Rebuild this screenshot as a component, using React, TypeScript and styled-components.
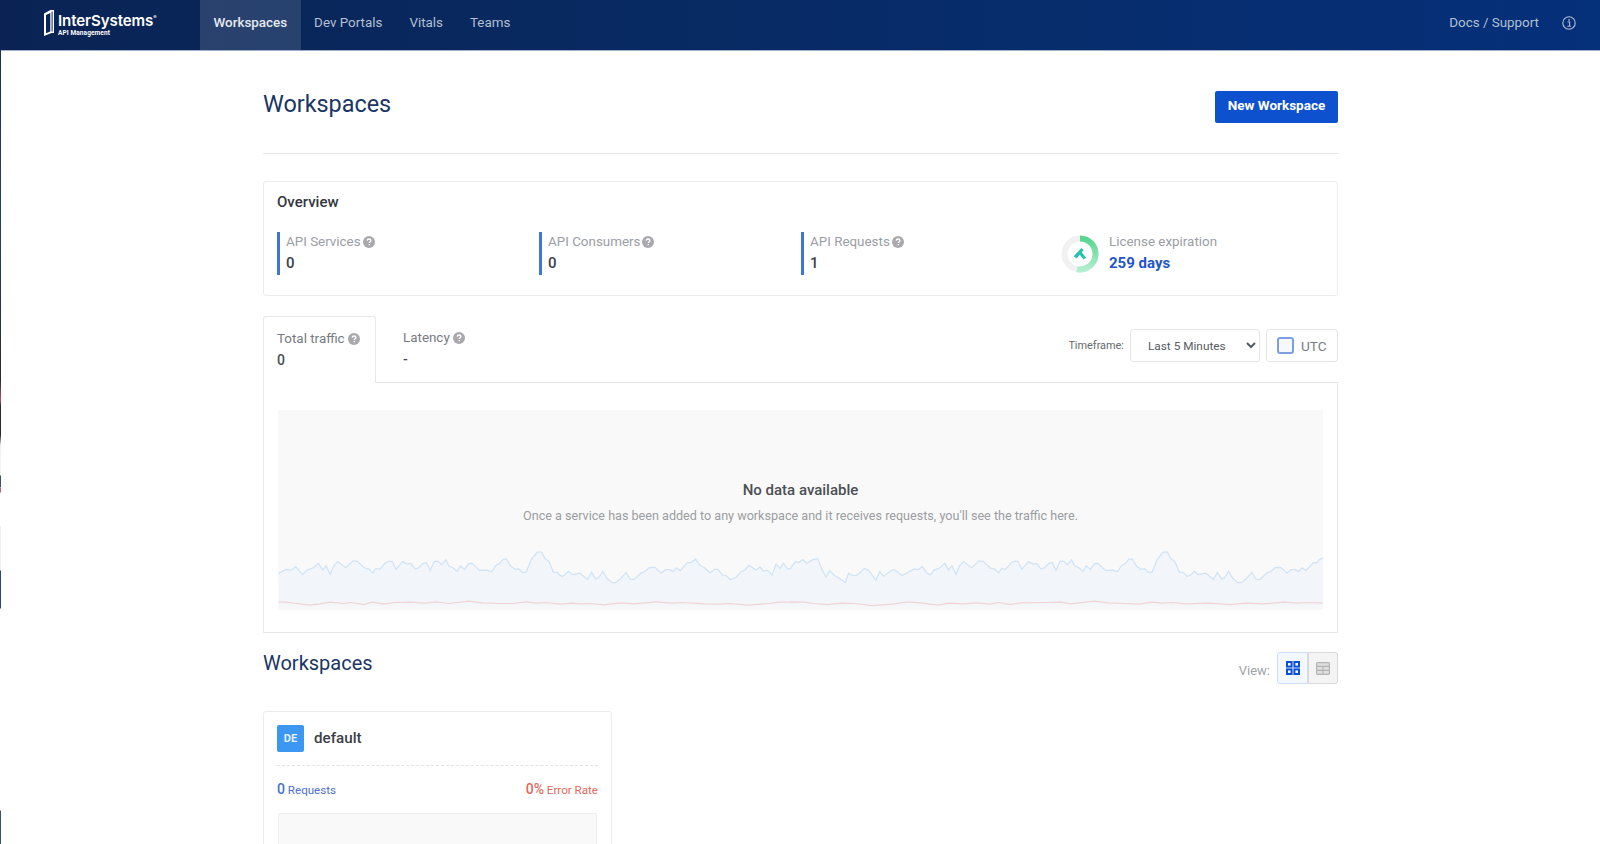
import React from "react";
import styled, { createGlobalStyle } from "styled-components";

const Global = createGlobalStyle`
  html, body { margin: 0; padding: 0; height: 100%; overflow: hidden; background: #fff; }
  body { font-family: Roboto, "Liberation Sans", sans-serif; color: #3c4043; }
  * { box-sizing: border-box; }
`;

const Page = styled.div`
  position: relative;
  height: 844px;
  overflow: hidden;
`;

const EdgeArtifact = styled.div`
  position: absolute;
  left: 0;
  top: 50px;
  width: 1px;
  height: 794px;
  background: linear-gradient(
    to bottom,
    #1c2f4f 0, #24406e 170px, #2a2a2a 330px, #c9476a 350px, #2a2a2a 356px, #2a2a2a 385px,
    #e8e8e8 395px, #f2f2f2 400px, #f2f2f2 425px, #3f5068 426px, #3f5068 437px,
    #fff 438px, #c4587e 438px, #c4587e 442px, #fff 443px, #fff 476px,
    #eee 476px, #eee 520px, #24488a 521px, #24488a 558px, #fff 559px, #fff 760px,
    #3a5070 761px, #3a5070 794px
  );
`;

const Nav = styled.header`
  height: 51px;
  display: flex;
  align-items: stretch;
  background: linear-gradient(90deg, #0a2354 0%, #082a62 40%, #05307a 100%);
  border-bottom: 1px solid #9fb0c8;
`;

const Brand = styled.div`
  width: 200px;
  padding: 10px 0 0 44px;
  display: flex;
  gap: 4px;
  color: #fff;
`;

const BrandText = styled.div`
  display: flex;
  flex-direction: column;
  padding-top: 3px;
`;

const BrandName = styled.span`
  font-family: Inter, Roboto, sans-serif;
  font-size: 15.1px;
  line-height: 16px;
  font-weight: 600;
  letter-spacing: -0.1px;
  sup { font-size: 5px; vertical-align: 7px; line-height: 0; }
`;

const BrandSub = styled.span`
  font-size: 6.5px;
  line-height: 8px;
  font-weight: 700;
  letter-spacing: 0.1px;
  white-space: nowrap;
`;

const NavLink = styled.a<{ $active?: boolean }>`
  display: flex;
  align-items: center;
  padding: 0 13.5px 5px;
  font-size: 13.4px;
  font-weight: ${p => (p.$active ? 500 : 400)};
  color: ${p => (p.$active ? "#e6ebf3" : "#b4c0d3")};
  background: ${p => (p.$active ? "rgba(255,255,255,0.13)" : "transparent")};
`;

const NavSpacer = styled.div`
  flex: 1;
`;

const NavRight = styled.div`
  display: flex;
  align-items: center;
  gap: 23px;
  padding: 0 24px 5px 0;
  font-size: 13.4px;
  color: #b4c0d3;
`;

const Main = styled.main`
  width: 1075px;
  margin-left: 263px;
`;

const PageHead = styled.div`
  height: 103px;
  padding-top: 39px;
  display: flex;
  justify-content: space-between;
  align-items: flex-start;
  border-bottom: 1px solid #e8e8e8;
`;

const Title = styled.h1`
  margin: 0;
  font-size: 23.4px;
  line-height: 28px;
  font-weight: 400;
  color: #1b3564;
`;

const PrimaryButton = styled.button`
  width: 123px;
  height: 32px;
  margin-top: 1px;
  border: 0;
  border-radius: 2px;
  background: #0d51cf;
  color: #fff;
  font: 700 13.5px Roboto, sans-serif;
  padding: 0 0 5px;
`;

const Card = styled.section`
  margin-top: 27px;
  height: 115px;
  padding: 11px 13px;
  border: 1px solid #ececec;
  border-radius: 3px;
`;

const CardTitle = styled.div`
  font-size: 15px;
  line-height: 18px;
  font-weight: 500;
  color: #33373d;
`;

const StatsRow = styled.div`
  margin-top: 21px;
  display: grid;
  grid-template-columns: repeat(4, 262px);
`;

const Stat = styled.div`
  height: 43px;
  border-left: 3px solid #3f74dc;
  padding-left: 6px;
`;

const StatLabel = styled.div`
  height: 19px;
  display: flex;
  align-items: center;
  gap: 2px;
  font-size: 13.4px;
  color: #9a9da6;
`;

const StatValue = styled.div`
  margin-top: 1px;
  font-size: 15px;
  line-height: 22px;
  font-weight: 500;
  color: #3c4148;
`;

const License = styled.div`
  height: 43px;
  margin-left: -2px;
  display: flex;
  align-items: center;
  gap: 10px;
`;

const LicenseLabel = styled.div`
  height: 17px;
  display: flex;
  align-items: center;
  font-size: 13.4px;
  color: #9a9da6;
`;

const LicenseValue = styled.div`
  margin-top: 2px;
  font-size: 15px;
  line-height: 22px;
  font-weight: 700;
  color: #2356c9;
`;

const TabBar = styled.div`
  margin-top: 20px;
  height: 67px;
  display: flex;
  align-items: flex-start;
  border-bottom: 1px solid #e4e4e4;
`;

const Tab = styled.div<{ $active?: boolean }>`
  width: ${p => (p.$active ? "113px" : "auto")};
  height: ${p => (p.$active ? "67px" : "66px")};
  padding: 12px 0 0 ${p => (p.$active ? "13px" : "27px")};
  background: #fff;
  ${p => p.$active && "border: 1px solid #e8e8e8; border-bottom: 0; border-radius: 3px 3px 0 0;"}
`;

const TabLabel = styled.div`
  height: 19px;
  display: flex;
  align-items: center;
  gap: 3.5px;
  font-size: 13.4px;
  color: #777a82;
`;

const TabValue = styled.div`
  margin-top: 1px;
  font-size: 14px;
  line-height: 22px;
  font-weight: 500;
  color: #4a4d55;
`;

const Controls = styled.div`
  margin-left: auto;
  padding-top: 13px;
  display: flex;
  align-items: flex-start;
`;

const TimeLabel = styled.label`
  font-size: 10.9px;
  line-height: 33px;
  color: #666a70;
  margin-right: 6px;
`;

const Select = styled.select`
  width: 130px;
  height: 33px;
  padding: 0 6px 0 13px;
  border: 1px solid #e6e6e6;
  border-radius: 3px;
  background: #fff;
  font: 11.8px Roboto, sans-serif;
  color: #555a62;
  outline: none;
`;

const UtcBox = styled.label`
  margin-left: 6px;
  width: 72px;
  height: 33px;
  display: flex;
  align-items: center;
  padding-left: 10px;
  gap: 7px;
  border: 1px solid #e6e6e6;
  border-radius: 3px;
  font-size: 13.6px;
  color: #777a82;
`;

const FakeCheck = styled.span`
  width: 17px;
  height: 17px;
  border: 2px solid #7e9fdf;
  border-radius: 3px;
  background: #f7f8fb;
`;

const ChartPanel = styled.div`
  height: 250px;
  padding: 27px 14px 22px;
  border: 1px solid #e8e8e8;
  border-top: 0;
`;

const ChartEmpty = styled.div`
  height: 100%;
  position: relative;
  background: #f9f9f9;
  text-align: center;
  padding-top: 70px;
  overflow: hidden;
`;

const EmptyTitle = styled.div`
  font-size: 15px;
  line-height: 20px;
  font-weight: 500;
  color: #4c4f55;
`;

const EmptyText = styled.div`
  margin-top: 7px;
  font-size: 12.6px;
  line-height: 18px;
  color: #9b9da2;
`;

const ChartArt = styled.svg`
  position: absolute;
  left: 0;
  bottom: 0;
  width: 100%;
  height: 80px;
`;

const SectionHead = styled.div`
  margin-top: 19px;
  height: 59px;
  display: flex;
  justify-content: space-between;
  align-items: flex-start;
`;

const SectionTitle = styled.h2`
  margin: 0;
  font-size: 20px;
  line-height: 22px;
  font-weight: 400;
  color: #1b3564;
`;

const ViewGroup = styled.div`
  display: flex;
  align-items: center;
`;

const ViewLabel = styled.span`
  font-size: 13px;
  color: #a0a2a8;
  margin: 4px 7px 0 0;
`;

const ViewButton = styled.span<{ $on?: boolean }>`
  width: ${p => (p.$on ? "31px" : "30px")};
  height: 32px;
  display: flex;
  align-items: center;
  justify-content: center;
  border: 1px solid ${p => (p.$on ? "#cfdcf3" : "#d8d8d8")};
  background: ${p => (p.$on ? "#f3f7fe" : "#f4f4f4")};
  border-radius: ${p => (p.$on ? "3px 0 0 3px" : "0 3px 3px 0")};
`;

const WorkspaceCard = styled.article`
  width: 349px;
  height: 240px;
  padding: 13px;
  border: 1px solid #ececec;
  border-radius: 3px;
`;

const WorkspaceHead = styled.div`
  height: 41px;
  display: flex;
  align-items: flex-start;
  gap: 10px;
  border-bottom: 1px dashed #e3e3e3;
`;

const Badge = styled.span`
  width: 27px;
  height: 27px;
  display: flex;
  align-items: center;
  justify-content: center;
  border-radius: 2px;
  background: #3b97f2;
  color: #e6f2fd;
  font-size: 11px;
  font-weight: 700;
`;

const WorkspaceName = styled.span`
  font-size: 15.2px;
  line-height: 26px;
  font-weight: 500;
  color: #3c4046;
`;

const Metrics = styled.div`
  height: 45px;
  margin-bottom: 2px;
  display: flex;
  justify-content: space-between;
  align-items: center;
  font-size: 11.6px;
`;

const Metric = styled.span<{ $color: string }>`
  color: ${p => p.$color};
  b { font-size: 14px; font-weight: 500; }
`;

const MiniChart = styled.div`
  margin: 0 1px;
  height: 120px;
  border: 1px solid #ececec;
  border-radius: 2px;
  background: #f9f9f9;
`;

const Help = () => (
  <svg width="12" height="12" viewBox="0 0 12 12" aria-hidden="true">
    <circle cx="6" cy="6" r="6" fill="#a9a9ad" />
    <path d="M4.2 4.6c.1-1 .9-1.6 1.9-1.6s1.8.6 1.8 1.5c0 1.3-1.6 1.3-1.6 2.6" fill="none" stroke="#fff" strokeWidth="1.3" />
    <rect x="5.6" y="8" width="1.3" height="1.3" fill="#fff" />
  </svg>
);

const Logo = () => (
  <svg width="10" height="26" viewBox="0 0 10 26" aria-hidden="true" style={{ flex: "none" }}>
    <path d="M0 3.5 6.5 0H10v23H7.6L0 26zM2 5v18.2l4.3-1.6V3z" fill="#fff" fillRule="evenodd" />
    <path d="M7.6 1.5h1v20h-1z" fill="#0a2354" />
  </svg>
);

const InfoIcon = () => (
  <svg width="14" height="14" viewBox="0 0 14 14" aria-hidden="true">
    <circle cx="7" cy="7" r="6.2" fill="none" stroke="#b4c0d3" strokeWidth="1.1" />
    <rect x="6.3" y="3.2" width="1.5" height="1.5" fill="#b4c0d3" />
    <path d="M5.6 6h2v4M5.4 10.2h3.4" fill="none" stroke="#b4c0d3" strokeWidth="1.1" />
  </svg>
);

const Ring = () => (
  <svg width="38" height="38" viewBox="0 0 38 38" aria-hidden="true" style={{ flex: "none" }}>
    <defs>
      <linearGradient id="ringG" x1="0" y1="0" x2="0" y2="1">
        <stop offset="0" stopColor="#58d58f" />
        <stop offset="1" stopColor="#b2eecd" />
      </linearGradient>
      <linearGradient id="hamG" x1="0" y1="1" x2="1" y2="0">
        <stop offset="0" stopColor="#22b8d0" />
        <stop offset="1" stopColor="#2fc98c" />
      </linearGradient>
    </defs>
    <circle cx="19" cy="19" r="15.5" fill="none" stroke="#f1f1f1" strokeWidth="6" />
    <path d="M19 3.5A15.5 15.5 0 1 1 16 34.2" fill="none" stroke="url(#ringG)" strokeWidth="6" />
    <path d="M12.8 21.2 20.4 13l2.4 2-2 2.2 4.4 5.8-2.8 1.2-3.6-4.4-3.2 3.6z" fill="url(#hamG)" />
  </svg>
);

const GridIcon = () => (
  <svg width="14" height="14" viewBox="0 0 14 14" aria-hidden="true">
    {[1, 8.4].flatMap(x =>
      [1, 8.4].map(y => (
        <rect key={`${x}-${y}`} x={x} y={y} width="4.6" height="4.6" fill="none" stroke="#0d51cf" strokeWidth="2" />
      ))
    )}
  </svg>
);

const TableIcon = () => (
  <svg width="14" height="13" viewBox="0 0 14 13" aria-hidden="true">
    <rect x="0.6" y="0.6" width="12.8" height="11.8" rx="1" fill="#dedede" stroke="#b4b4b4" strokeWidth="1.2" />
    <path d="M0.6 4.4h12.8M0.6 8.4h12.8M7 4.4v8" stroke="#b4b4b4" strokeWidth="1.1" fill="none" />
  </svg>
);

const leftPts = [38,130,60,118,75,120,88,110,108,133,122,120,140,113,155,100,168,120,178,107,190,133,200,108,212,95,236,113,258,93,270,94,292,114,305,117,316,128,325,115,337,118,352,100,362,94,373,94,385,117,405,95,418,102,429,100,442,117,452,113,465,100,475,98,486,121,498,94,510,94,520,104,532,90,542,108,555,114,566,124,576,108,588,118,600,101,610,100,633,121,655,120,668,125,680,107,692,100,702,88,712,88,725,109,738,118,748,116,760,127,770,127,785,90,803,67,816,67,826,86,838,95,851,126,862,127,875,139,885,134,895,124,907,133,930,129,952,148,964,127,976,146,985,143,997,124,1010,145,1025,157,1035,157,1050,145,1066,127,1078,147,1090,148,1110,129,1120,125,1135,113,1152,112,1170,129,1182,119,1195,119,1205,124,1215,113,1226,122,1248,98,1258,98,1272,88,1285,106,1298,113,1315,128,1328,118,1338,118,1352,135,1362,136,1375,148,1390,143,1408,124,1418,119,1430,105,1450,120,1463,111,1473,123,1485,120,1498,135,1510,103,1522,115,1532,100,1545,117,1555,115];
const rightPts = [0,115,14,95,25,97,36,89,48,100,65,90,80,86,95,122,105,140,116,122,130,136,148,146,162,157,172,130,185,136,195,136,205,128,218,115,230,120,240,132,253,150,264,124,276,138,300,120,310,120,330,136,365,117,378,119,390,110,405,130,415,134,425,120,443,113,457,100,468,120,478,107,490,133,500,108,512,95,536,113,558,93,570,94,592,114,605,117,616,128,625,115,637,118,652,100,662,94,673,94,685,117,705,95,718,102,729,100,742,117,752,113,765,100,775,98,786,121,798,94,810,94,820,104,832,90,842,108,855,114,866,124,876,108,888,118,900,101,910,100,933,121,955,120,968,125,980,107,992,100,1002,88,1012,88,1025,109,1038,118,1048,116,1060,127,1070,127,1085,90,1103,67,1116,67,1126,86,1138,95,1151,126,1162,127,1175,139,1185,134,1195,124,1207,133,1230,129,1252,148,1264,127,1276,146,1285,143,1297,124,1310,145,1325,157,1335,157,1350,145,1366,127,1378,147,1390,148,1410,129,1420,125,1435,113,1452,112,1470,129,1482,119,1495,119,1505,124,1515,113,1526,122,1548,98,1558,98,1568,88];
const redLeft = [38,214,60,215,90,219,130,224,160,220,190,215,230,219,250,216,290,222,315,215,350,221,380,216,430,215,470,218,505,214,540,219,600,212,640,217,690,219,730,219,770,214,800,218,830,216,870,221,905,218,930,220,960,219,1000,223,1050,217,1090,220,1155,214,1200,218,1230,216,1300,220,1350,221,1370,219,1430,224,1490,219,1520,215,1560,215];
const redRight = [0,214,40,215,70,219,110,222,150,218,190,219,240,225,300,221,350,214,390,218,435,224,470,218,510,220,550,217,590,221,615,216,650,222,680,217,760,216,800,215,830,220,900,212,940,217,990,219,1030,221,1070,215,1100,218,1130,216,1170,220,1240,218,1300,222,1350,218,1400,220,1460,215,1500,218,1530,216,1568,217];

const toXY = (arr: number[], base: number) => {
  const out: string[] = [];
  for (let i = 0; i < arr.length; i += 2) {
    const x = base + arr[i] / 2.958 - 277;
    const y = arr[i + 1] / 2.958 - 0.5;
    out.push(`${x.toFixed(1)},${y.toFixed(1)}`);
  }
  return out;
};
const blue = [...toXY(leftPts, 265), ...toXY(rightPts, 790), "1046,28"];
const red = [...toXY(redLeft, 265), ...toXY(redRight, 790), "1046,73"];

const ChartLines = () => (
  <ChartArt viewBox="0 0 1046 80" preserveAspectRatio="none" aria-hidden="true">
    <defs>
      <linearGradient id="areaG" x1="0" y1="0" x2="0" y2="1">
        <stop offset="0" stopColor="#f2f5f9" />
        <stop offset="0.88" stopColor="#f2f5f9" />
        <stop offset="1" stopColor="#f8f8f8" />
      </linearGradient>
    </defs>
    <polygon points={`${blue.join(" ")} 1046,80 1,80`} fill="url(#areaG)" />
    <polyline points={blue.join(" ")} fill="none" stroke="#cfe3f6" strokeWidth="1.2" />
    <polyline points={red.join(" ")} fill="none" stroke="#f1d3d7" strokeWidth="1.2" />
  </ChartArt>
);

export default function App() {
  return (
    <Page>
      <Global />
      <EdgeArtifact />
      <Nav>
        <Brand>
          <Logo />
          <BrandText>
            <BrandName>InterSystems<sup>®</sup></BrandName>
            <BrandSub>API Management</BrandSub>
          </BrandText>
        </Brand>
        <NavLink $active>Workspaces</NavLink>
        <NavLink>Dev Portals</NavLink>
        <NavLink>Vitals</NavLink>
        <NavLink>Teams</NavLink>
        <NavSpacer />
        <NavRight>
          Docs / Support
          <InfoIcon />
        </NavRight>
      </Nav>
      <Main>
        <PageHead>
          <Title>Workspaces</Title>
          <PrimaryButton>New Workspace</PrimaryButton>
        </PageHead>
        <Card>
          <CardTitle>Overview</CardTitle>
          <StatsRow>
            <Stat>
              <StatLabel>API Services <Help /></StatLabel>
              <StatValue>0</StatValue>
            </Stat>
            <Stat>
              <StatLabel>API Consumers <Help /></StatLabel>
              <StatValue>0</StatValue>
            </Stat>
            <Stat>
              <StatLabel>API Requests <Help /></StatLabel>
              <StatValue>1</StatValue>
            </Stat>
            <License>
              <Ring />
              <div>
                <LicenseLabel>License expiration</LicenseLabel>
                <LicenseValue>259 days</LicenseValue>
              </div>
            </License>
          </StatsRow>
        </Card>
        <TabBar>
          <Tab $active>
            <TabLabel>Total traffic <Help /></TabLabel>
            <TabValue>0</TabValue>
          </Tab>
          <Tab>
            <TabLabel>Latency <Help /></TabLabel>
            <TabValue>-</TabValue>
          </Tab>
          <Controls>
            <TimeLabel>Timeframe:</TimeLabel>
            <Select defaultValue="5">
              <option value="5">Last 5 Minutes</option>
            </Select>
            <UtcBox><FakeCheck />UTC</UtcBox>
          </Controls>
        </TabBar>
        <ChartPanel>
          <ChartEmpty>
            <EmptyTitle>No data available</EmptyTitle>
            <EmptyText>Once a service has been added to any workspace and it receives requests, you'll see the traffic here.</EmptyText>
            <ChartLines />
          </ChartEmpty>
        </ChartPanel>
        <SectionHead>
          <SectionTitle>Workspaces</SectionTitle>
          <ViewGroup>
            <ViewLabel>View:</ViewLabel>
            <ViewButton $on><GridIcon /></ViewButton>
            <ViewButton><TableIcon /></ViewButton>
          </ViewGroup>
        </SectionHead>
        <WorkspaceCard>
          <WorkspaceHead>
            <Badge>DE</Badge>
            <WorkspaceName>default</WorkspaceName>
          </WorkspaceHead>
          <Metrics>
            <Metric $color="#4a6fd0"><b>0</b> Requests</Metric>
            <Metric $color="#df6a5c"><b>0%</b> Error Rate</Metric>
          </Metrics>
          <MiniChart />
        </WorkspaceCard>
      </Main>
    </Page>
  );
}
